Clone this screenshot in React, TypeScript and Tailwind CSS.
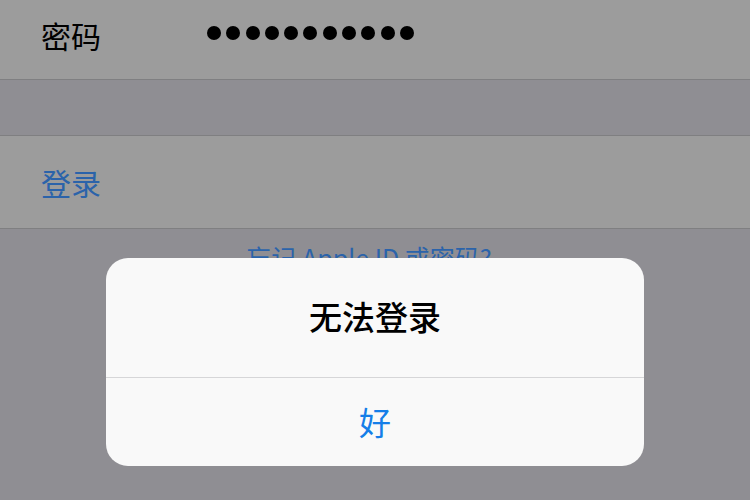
import React from 'react';

const dots = Array.from({ length: 11 });

export default function App() {
  return (
    <div className="relative w-[750px] h-[500px] overflow-hidden bg-[#8f8e93] font-['Noto_Sans_CJK_SC',sans-serif]">
      {/* password row */}
      <div className="flex h-[80px] items-center border-b border-[#7f7f81] bg-[#9c9c9c] pb-[9px]">
        <div className="w-[207px] pl-[41px] text-[30px] leading-none text-black">密码</div>
        <div className="flex items-center gap-[5.3px] -mt-[5px]">
          {dots.map((_, i) => (
            <div key={i} className="h-[14px] w-[14px] rounded-full bg-black" />
          ))}
        </div>
      </div>

      {/* spacer */}
      <div className="h-[56px] border-b border-[#7f7f81] bg-[#8f8e93]" />

      {/* login row */}
      <div className="flex h-[93px] items-center border-b border-[#7f7f81] bg-[#9c9c9c] pl-[41px]">
        <span className="text-[30px] leading-none text-[#2b63aa]">登录</span>
      </div>

      {/* forgot link */}
      <div className="flex justify-center pt-[16px] pr-[12px]">
        <span className="text-[25px] leading-none text-[#2b63aa]">忘记 Apple ID 或密码?</span>
      </div>

      {/* alert */}
      <div className="absolute left-[106px] top-[258px] flex h-[208px] w-[538px] flex-col overflow-hidden rounded-[22px] bg-[#f9f9f9]">
        <div className="flex h-[120px] items-center justify-center border-b border-[#d6d6d8] pb-[3px]">
          <span className="text-[33px] font-medium leading-none text-black">无法登录</span>
        </div>
        <div className="flex flex-1 items-center justify-center pb-[2px]">
          <span className="text-[32px] leading-none text-[#157ee8]">好</span>
        </div>
      </div>
    </div>
  );
}
